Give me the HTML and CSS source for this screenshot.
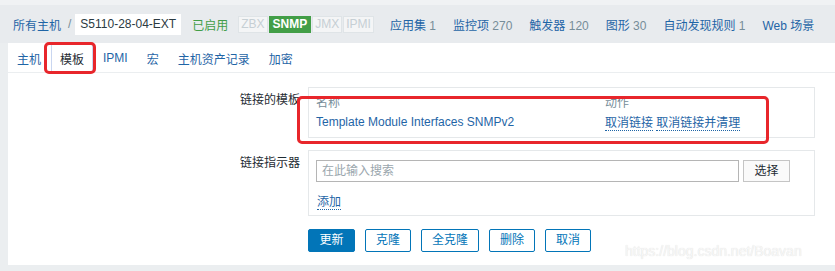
FILE: index.html
```html
<!DOCTYPE html>
<html>
<head>
<meta charset="utf-8">
<link rel="stylesheet" href="styles.css">
</head>
<body>
<div class="header">
  <a class="lnk">所有主机</a>
  <span class="sep">/</span>
  <span class="crumb">S5110-28-04-EXT</span>
  <span class="enabled">已启用</span>
  <span class="tags"><span class="tag">ZBX</span><span class="tag on">SNMP</span><span class="tag">JMX</span><span class="tag">IPMI</span></span>
  <span class="cnt first"><a class="lnk">应用集</a> <span class="num">1</span></span>
  <span class="cnt"><a class="lnk">监控项</a> <span class="num">270</span></span>
  <span class="cnt"><a class="lnk">触发器</a> <span class="num">120</span></span>
  <span class="cnt"><a class="lnk">图形</a> <span class="num">30</span></span>
  <span class="cnt"><a class="lnk">自动发现规则</a> <span class="num">1</span></span>
  <span class="cnt"><a class="lnk">Web 场景</a></span>
</div>
<div class="panel">
  <div class="tabs">
    <span class="tab">主机</span>
    <span class="tab active">模板</span>
    <span class="tab">IPMI</span>
    <span class="tab">宏</span>
    <span class="tab">主机资产记录</span>
    <span class="tab">加密</span>
  </div>
  <div class="form">
    <div class="label">链接的模板</div>
    <div class="box box1">
      <div class="trow thead"><span class="c1">名称</span><span class="c2">动作</span></div>
      <div class="trow"><span class="c1"><a class="lnk">Template Module Interfaces SNMPv2</a></span><span class="c2"><a class="act">取消链接</a> <a class="act">取消链接并清理</a></span></div>
    </div>
    <div class="label">链接指示器</div>
    <div class="box box2">
      <div class="inrow"><div class="input">在此输入搜索</div><div class="sel">选择</div></div>
      <div class="addrow"><a class="act">添加</a></div>
    </div>
    <div></div>
    <div class="buttons">
      <span class="btn main">更新</span>
      <span class="btn">克隆</span>
      <span class="btn">全克隆</span>
      <span class="btn">删除</span>
      <span class="btn">取消</span>
    </div>
  </div>
</div>
<div class="mark m1"></div>
<div class="mark m2"></div>
<div class="wm">https://blog.csdn.net/Boavan</div>
</body>
</html>
```
FILE: styles.css
```css
html, body { margin: 0; padding: 0; }
body {
  background: #ebeef0;
  font-family: "Liberation Sans", Arial, "Noto Sans CJK SC", sans-serif;
  font-size: 12px;
  color: #1f2c33;
  width: 835px;
  height: 271px;
  overflow: hidden;
  position: relative;
}
.lnk { color: #1f65a6; }
.header {
  height: 43px;
  box-sizing: border-box;
  border-top: 5px solid #f0f2f4;
  background: #e8ebee;
  display: flex;
  align-items: center;
  padding-left: 13px;
  white-space: nowrap;
}
.sep { color: #768d99; margin: 0 4px 0 7px; }
.crumb { background: #fff; padding: 4px 5px 4px 5px; line-height: 13px; color: #2b3a42; }
.enabled { color: #429e47; margin-left: 11px; }
.tags { display: flex; margin-left: 10px; }
.tag {
  border: 1px solid #dfe4e7;
  color: #c6cfd4;
  padding: 0 2px;
  line-height: 15px;
  margin-right: 1px;
  background: #f4f5f6;
}
.tag.on { background: #429e47; border-color: #429e47; color: #fff; font-weight: bold; padding: 0 3px; }
.cnt { margin-left: 17px; }
.cnt.first { margin-left: 15px; }
.num { color: #768d99; }
.panel {
  margin-left: 8px;
  background: #fff;
  height: 222px;
}
.tabs {
  height: 29px;
  border-bottom: 1px solid #ebeef0;
  display: flex;
  align-items: stretch;
}
.tab {
  color: #1f65a6;
  padding: 0 8px;
  border: 1px solid transparent;
  border-bottom: none;
  display: flex;
  align-items: center;
  margin-right: 1px;
}
.tab.active { color: #1f2c33; border-color: #c9d6f0; border-top-color: transparent; background: #fff; }
.form {
  display: grid;
  grid-template-columns: 292px 507px;
  column-gap: 8px;
  row-gap: 12px;
  padding-top: 14px;
}
.label { text-align: right; padding-top: 3px; }
.box { border: 1px solid #e5e8ea; box-sizing: border-box; }
.box1 { height: 51px; padding: 4px 7px 0; }
.trow { display: flex; height: 20px; align-items: center; }
.thead { height: 18px; color: #768d99; }
.trow + .trow { height: 23px; }
.c1 { width: 289px; }
.act { color: #1f65a6; border-bottom: 1px dotted #1f65a6; }
.box2 { height: 66px; padding: 9px 7px 0; }
.inrow { display: flex; }
.input {
  width: 423px; height: 22px; box-sizing: border-box;
  border: 1px solid #b5b5b5; color: #9aa6ad;
  padding-left: 5px; line-height: 20px;
}
.sel {
  margin-left: 4px; width: 47px; height: 22px; box-sizing: border-box;
  border: 1px solid #c5c5c5; background: #fafafa; text-align: center; line-height: 20px;
}
.addrow { padding-top: 10px; padding-left: 1px; }
.buttons { display: flex; gap: 9px; margin-top: 1px; }
.btn {
  height: 23px; box-sizing: border-box;
  border: 1px solid #0275b8; border-radius: 2px;
  color: #0275b8; background: #fff;
  padding: 0 10px; line-height: 21px;
}
.btn.main { background: #0275b8; color: #fff; width: 47px; text-align: center; }
.btn + .btn { margin-left: 1px; }
.mark {
  position: absolute;
  border: 3px solid #e8262b;
  border-radius: 5px;
  box-sizing: border-box;
}
.m1 { left: 44px; top: 42px; width: 52px; height: 32px; }
.m2 { left: 297px; top: 96px; width: 472px; height: 48px; }
.wm {
  position: absolute;
  left: 625px; top: 243px;
  font-size: 14px;
  color: #f7f7f7;
  text-shadow: 0 0 1px #d8d8d8;
}
```
